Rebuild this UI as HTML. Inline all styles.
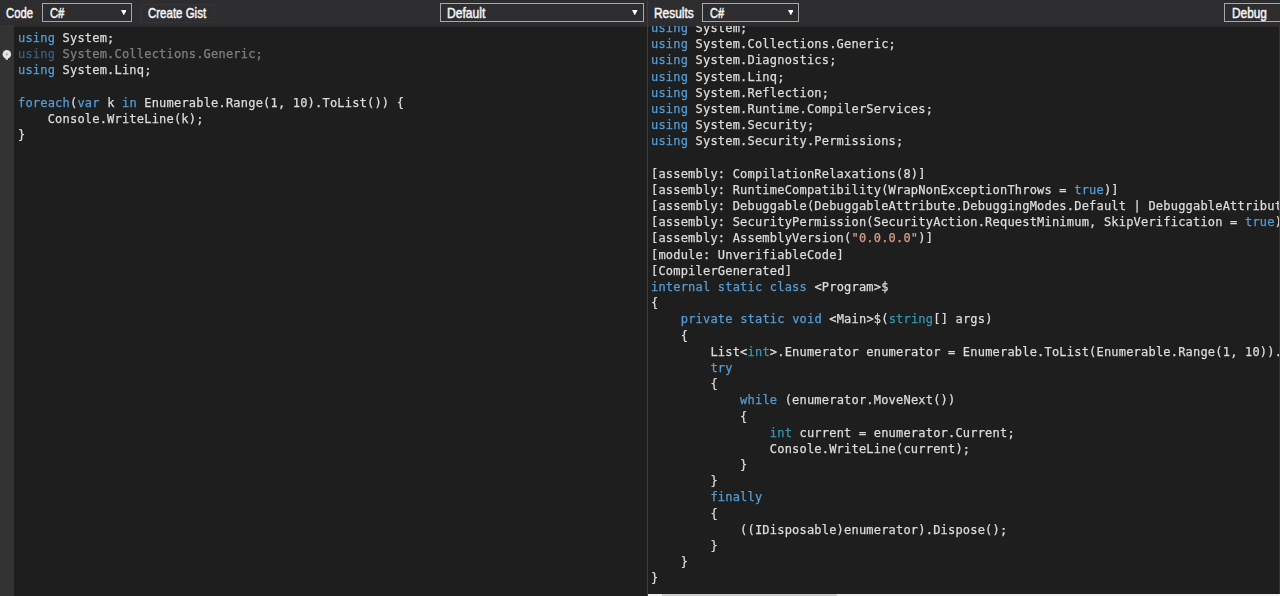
<!DOCTYPE html>
<html><head><meta charset="utf-8"><title>SharpLab</title>
<style>
html,body{margin:0;padding:0;}
body{width:1280px;height:596px;overflow:hidden;background:#1e1e1e;position:relative;font-family:"Liberation Sans",sans-serif;}
.hdr{position:absolute;left:0;top:0;width:1280px;height:26px;background:#2d2d30;border-bottom:1px solid #262628;}
.lbl{position:absolute;top:4px;height:18px;line-height:18px;font-size:14.5px;color:#f4f4f4;white-space:nowrap;transform:scaleX(var(--s,0.81));transform-origin:0 50%;-webkit-text-stroke:0.5px #f4f4f4;}
.sel{position:absolute;top:3px;height:17px;border:1px solid #a8a8a8;background:#2d2d30;box-sizing:content-box;}
.sel .arr{position:absolute;right:4.6px;top:5.6px;width:5.6px;height:5.4px;display:block;}
.btn{position:absolute;top:4px;height:17px;border:1px solid #343437;background:#2e2e31;}
.gutter{position:absolute;left:0;top:25px;width:14px;height:571px;background:#333333;}
.divider{position:absolute;left:647px;top:0;width:1px;height:596px;background:#3c3c3c;}
pre{position:absolute;margin:0;font-family:"DejaVu Sans Mono","Liberation Mono",monospace;font-size:12px;letter-spacing:0.2px;line-height:16.18px;color:#dcdcdc;white-space:pre;-webkit-text-stroke-width:0.25px;will-change:transform;}
.k{color:#569cd6;}
.s{color:#d69d85;}
.t{color:#3399b5;}
.dim{opacity:0.5;}
#left{left:18px;top:30px;}
#rightwrap{position:absolute;left:648px;top:26px;width:632px;height:568px;overflow:hidden;}
#right{left:3px;top:-6.5px;}
.sb{position:absolute;left:648px;top:594px;width:632px;height:2px;background:#f1f1f1;}
.sb i{position:absolute;left:14px;top:0;width:175px;height:2px;background:#cdcdcd;}
.edge{position:absolute;left:1279px;top:26px;width:1px;height:568px;background:#343434;}
.bulb{position:absolute;left:2px;top:49px;width:10px;height:12px;}
</style></head><body>
<div class="hdr">
  <div class="sel" style="left:42px;width:88px"><svg class="arr" viewBox="0 0 56 54"><polygon points="0,0 56,0 28,54" fill="#ffffff"/></svg></div>
  <div class="btn" style="left:140px;width:73px"></div>
  <div class="sel" style="left:440px;width:202px"><svg class="arr" style="right:5.2px" viewBox="0 0 56 54"><polygon points="0,0 56,0 28,54" fill="#ffffff"/></svg></div>
  <div class="sel" style="left:702px;width:95px"><svg class="arr" viewBox="0 0 56 54"><polygon points="0,0 56,0 28,54" fill="#ffffff"/></svg></div>
  <div class="sel" style="left:1224px;width:70px"></div>
  <span class="lbl" id="l0" style="left:6.2px;--s:0.7770">Code</span>
  <span class="lbl" id="l1" style="left:50.2px;--s:0.7750">C#</span>
  <span class="lbl" id="l2" style="left:148.2px;--s:0.7920">Create Gist</span>
  <span class="lbl" id="l3" style="left:447.3px;--s:0.8350">Default</span>
  <span class="lbl" id="l4" style="left:654.2px;--s:0.8200">Results</span>
  <span class="lbl" id="l5" style="left:710.2px;--s:0.7585">C#</span>
  <span class="lbl" id="l6" style="left:1232.2px;--s:0.8160">Debug</span>
</div>
<div class="gutter"></div>
<svg class="bulb" viewBox="0 0 10 12"><circle cx="4.85" cy="5.2" r="4.25" fill="#e4e4e4"/><rect x="3.7" y="8.6" width="2.3" height="2.2" rx="0.6" fill="#e4e4e4"/><circle cx="4.85" cy="5.4" r="1.1" fill="#a8a8a8"/></svg>
<pre id="left"><span class="k">using</span> System;
<span class="dim"><span class="k">using</span> System.Collections.Generic;</span>
<span class="k">using</span> System.Linq;

<span class="k">foreach</span>(<span class="k">var</span> k <span class="k">in</span> Enumerable.Range(1, 10).ToList()) {
    Console.WriteLine(k);
}</pre>
<div id="rightwrap"><pre id="right"><span class="k">using</span> System;
<span class="k">using</span> System.Collections.Generic;
<span class="k">using</span> System.Diagnostics;
<span class="k">using</span> System.Linq;
<span class="k">using</span> System.Reflection;
<span class="k">using</span> System.Runtime.CompilerServices;
<span class="k">using</span> System.Security;
<span class="k">using</span> System.Security.Permissions;

[assembly: CompilationRelaxations(8)]
[assembly: RuntimeCompatibility(WrapNonExceptionThrows = <span class="k">true</span>)]
[assembly: Debuggable(DebuggableAttribute.DebuggingModes.Default | DebuggableAttribute.DebuggingModes.DisableOptimizations | DebuggableAttribute.DebuggingModes.IgnoreSymbolStoreSequencePoints | DebuggableAttribute.DebuggingModes.EnableEditAndContinue)]
[assembly: SecurityPermission(SecurityAction.RequestMinimum, SkipVerification = <span class="k">true</span>)]
[assembly: AssemblyVersion(<span class="s">"0.0.0.0"</span>)]
[module: UnverifiableCode]
[CompilerGenerated]
<span class="k">internal</span> <span class="k">static</span> <span class="k">class</span> &lt;Program&gt;$
{
    <span class="k">private</span> <span class="k">static</span> <span class="k">void</span> &lt;Main&gt;$(<span class="t">string</span>[] args)
    {
        List&lt;<span class="t">int</span>&gt;.Enumerator enumerator = Enumerable.ToList(Enumerable.Range(1, 10)).GetEnumerator();
        <span class="k">try</span>
        {
            <span class="k">while</span> (enumerator.MoveNext())
            {
                <span class="t">int</span> current = enumerator.Current;
                Console.WriteLine(current);
            }
        }
        <span class="k">finally</span>
        {
            ((IDisposable)enumerator).Dispose();
        }
    }
}</pre></div>
<div class="divider"></div>
<div class="sb"><i></i></div>
<div class="edge"></div>
</body></html>
